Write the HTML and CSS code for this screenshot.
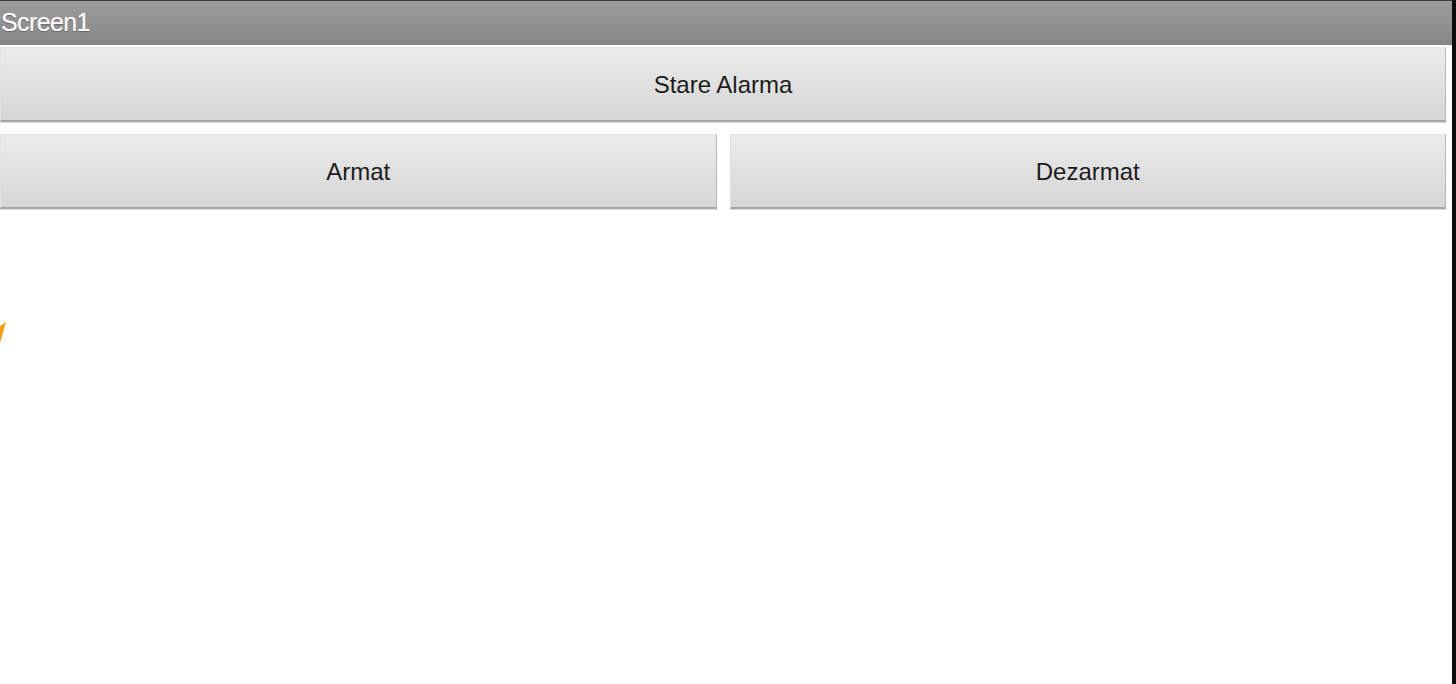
FILE: index.html
```html
<!DOCTYPE html>
<html>
<head>
<meta charset="utf-8">
<link rel="stylesheet" href="styles.css">
</head>
<body>
<div class="screen">
  <div class="main">
    <div class="titlebar"><span class="title">Screen1</span></div>
    <div class="content">
      <div class="btn full">Stare Alarma</div>
      <div class="row">
        <div class="btn">Armat</div>
        <div class="btn">Dezarmat</div>
      </div>
      <svg class="shard" width="8" height="24" viewBox="0 0 8 24"><polygon points="0,4 6,0 0,21" fill="#f0a010"/></svg>
    </div>
  </div>
  <div class="edge"></div>
</div>
</body>
</html>
```
FILE: styles.css
```css
html, body {
  margin: 0;
  padding: 0;
  background: #fff;
}
.screen {
  display: flex;
  width: 1456px;
  height: 684px;
  overflow: hidden;
}
.main {
  flex: 1;
  display: flex;
  flex-direction: column;
  background: #fff;
}
.edge {
  width: 4px;
  background: #0c0c0c;
}
.titlebar {
  height: 44px;
  border-top: 1px solid #3a3a3a;
  background: linear-gradient(#9c9c9c, #868686);
  display: flex;
  align-items: center;
  padding-left: 1px;
}
.title {
  font-family: "Liberation Sans", Arial, sans-serif;
  font-size: 25px;
  letter-spacing: -0.6px;
  color: #fafafa;
  text-shadow: 0 0 1px rgba(255,255,255,0.6), 0 1px 1px rgba(0,0,0,0.35);
  margin-top: -2px;
}
.content {
  position: relative;
  flex: 1;
  padding: 2px 6px 0 0;
  display: flex;
  flex-direction: column;
  gap: 12px;
}
.row {
  display: flex;
  gap: 13px;
}
.row .btn {
  flex: 1;
}
.btn {
  display: flex;
  align-items: center;
  justify-content: center;
  padding-top: 2px;
  font-family: "Liberation Sans", Arial, sans-serif;
  font-size: 24px;
  color: #1c1c1c;
  background: linear-gradient(#ebebeb, #d6d6d6);
  border: 1px solid #e2e2e2;
  border-bottom: 2px solid #a6a6a6;
  border-right: 1px solid #b8b8b8;
  box-shadow: 0 1px 1px rgba(0,0,0,0.12);
  box-sizing: border-box;
  height: 75px;
}
.shard {
  position: absolute;
  left: 0;
  top: 277px;
}
```
